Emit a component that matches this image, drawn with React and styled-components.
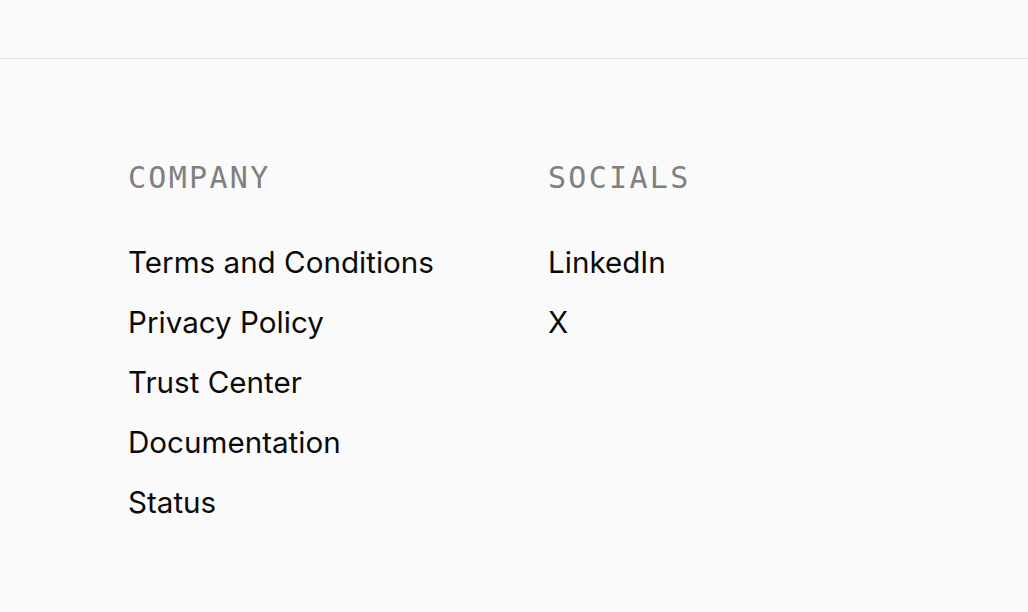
import React from 'react';
import styled, { createGlobalStyle } from 'styled-components';

const GlobalStyle = createGlobalStyle`
  html, body {
    margin: 0;
    padding: 0;
    background: #fafafa;
  }
`;

const Page = styled.div`
  min-height: 612px;
  background: #fafafa;
`;

const TopBar = styled.div`
  height: 58px;
  border-bottom: 1px solid #dedede;
`;

const Footer = styled.footer`
  display: grid;
  grid-template-columns: 420px 420px;
  padding: 100px 128px 0;
`;

const Column = styled.div`
  display: flex;
  flex-direction: column;
`;

const Heading = styled.h3`
  margin: 0 0 47px;
  font-family: "DejaVu Sans Mono", monospace;
  font-size: 30px;
  font-weight: 400;
  line-height: 38px;
  letter-spacing: 2.3px;
  color: #808080;
`;

const LinkList = styled.ul`
  list-style: none;
  margin: 0;
  padding: 0;
  display: flex;
  flex-direction: column;
  gap: 24px;
`;

const Link = styled.a`
  display: block;
  font-family: Inter, "Liberation Sans", sans-serif;
  font-size: 29.6px;
  line-height: 36px;
  color: #0a0a0a;
  text-decoration: none;
`;

const columns = [
  {
    title: 'COMPANY',
    links: ['Terms and Conditions', 'Privacy Policy', 'Trust Center', 'Documentation', 'Status'],
  },
  {
    title: 'SOCIALS',
    links: ['LinkedIn', 'X'],
  },
];

export default function App() {
  return (
    <Page>
      <GlobalStyle />
      <TopBar />
      <Footer>
        {columns.map((col) => (
          <Column key={col.title}>
            <Heading>{col.title}</Heading>
            <LinkList>
              {col.links.map((link) => (
                <li key={link}>
                  <Link href="#">{link}</Link>
                </li>
              ))}
            </LinkList>
          </Column>
        ))}
      </Footer>
    </Page>
  );
}
